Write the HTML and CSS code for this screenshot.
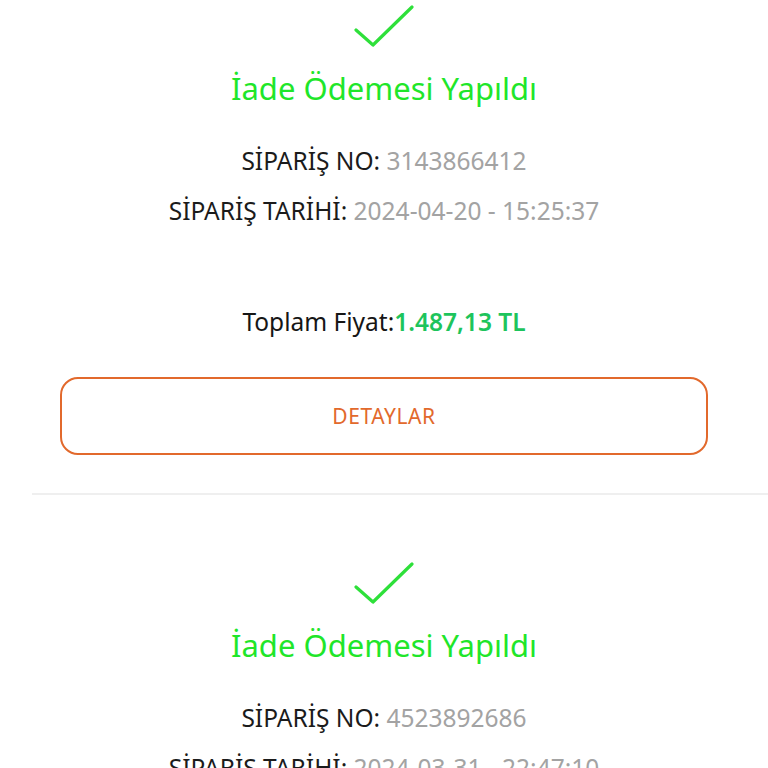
FILE: index.html
```html
<!DOCTYPE html>
<html lang="tr">
  <head>
    <meta charset="UTF-8" />
    <title>Siparişlerim</title>
    <link rel="stylesheet" href="styles.css">
  </head>
  <body>
    <div class="orders">
      <div class="order">
        <svg class="check" width="60" height="44" viewBox="0 0 60 44">
          <polyline points="2,26 19,41 58,3" />
        </svg>
        <h2 class="status">İade Ödemesi Yapıldı</h2>
        <p class="info"><span class="label">SİPARİŞ NO:</span> <span class="value">3143866412</span></p>
        <p class="info"><span class="label">SİPARİŞ TARİHİ:</span> <span class="value">2024-04-20 - 15:25:37</span></p>
        <p class="total">Toplam Fiyat:<b>1.487,13 TL</b></p>
        <button class="details">DETAYLAR</button>
      </div>

      <div class="order">
        <svg class="check" width="60" height="44" viewBox="0 0 60 44">
          <polyline points="2,26 19,41 58,3" />
        </svg>
        <h2 class="status">İade Ödemesi Yapıldı</h2>
        <p class="info"><span class="label">SİPARİŞ NO:</span> <span class="value">4523892686</span></p>
        <p class="info"><span class="label">SİPARİŞ TARİHİ:</span> <span class="value">2024-03-31 - 22:47:10</span></p>
        <p class="total">Toplam Fiyat:<b>912,40 TL</b></p>
        <button class="details">DETAYLAR</button>
      </div>
    </div>
  </body>
</html>
```

FILE: styles.css
```css
* {
  box-sizing: border-box;
}

html,
body {
  height: 100%;
}

body {
  font-family: "Noto Sans", Lato, sans-serif;
  background: #ffffff;
  margin: 0;
  padding: 0;
  overflow: hidden;
}

/* list is scrolled a little, first card's top is off screen */
.orders {
  margin-top: -62px;
  padding-left: 32px;
}

.order {
  display: flex;
  flex-direction: column;
  align-items: center;
  padding: 66px 60px 38px 28px;
  border-bottom: 2px solid #efefef;
}

.check {
  display: block;
  flex-shrink: 0;
  fill: none;
  stroke: #2ee03a;
  stroke-width: 3.2;
  stroke-linecap: round;
  stroke-linejoin: round;
}

.status {
  margin: 20px 0 0;
  font-size: 31px;
  font-weight: 400;
  color: #1fe62a;
  line-height: 40px;
  white-space: nowrap;
}

.info {
  margin: 0;
  font-size: 24.5px;
  line-height: 50px;
  color: #1b1b1b;
  white-space: nowrap;
}

.status + .info {
  margin-top: 28px;
}

.value {
  color: #a3a3a3;
}

.total {
  margin: 72px 0 0;
  font-size: 24.5px;
  line-height: 28px;
  color: #161616;
  white-space: nowrap;
}

.total b {
  color: #1dc45c;
  font-weight: 600;
}

.details {
  margin-top: 41px;
  width: 100%;
  height: 78px;
  flex-shrink: 0;
  background: #ffffff;
  border: 2px solid #e2692c;
  border-radius: 18px;
  color: #e2692c;
  font-family: inherit;
  font-size: 21px;
  letter-spacing: 0.6px;
}
```
